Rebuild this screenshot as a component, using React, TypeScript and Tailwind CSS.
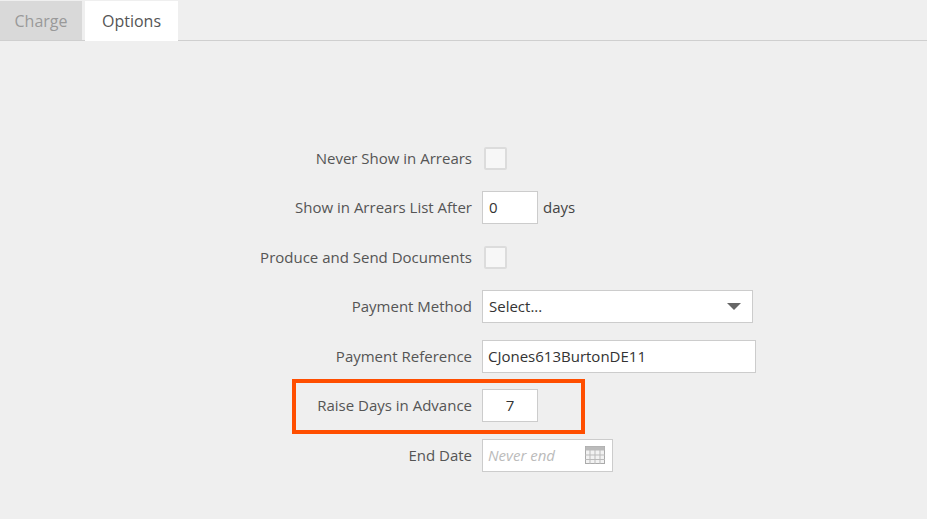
import { ChevronDown } from "lucide-react";

const Row = ({ label, children, highlight }: { label: string; children: React.ReactNode; highlight?: boolean }) => (
  <div className="relative flex items-center h-[32px]">
    <div className="w-[472px] text-right pr-0 text-[#555]">{label}</div>
    <div className="ml-[10px] flex items-center">{children}</div>
    {highlight && (
      <div className="absolute left-[292px] top-[-11px] w-[293px] h-[55px] border-4 border-[#ff4e00]" />
    )}
  </div>
);

const Check = () => (
  <div className="ml-[2px] w-[23px] h-[23px] border-2 border-[#dcdcdc] bg-[#f7f7f7] rounded-[2px]" />
);

export default function App() {
  return (
    <div className="w-[927px] h-[519px] bg-[#efefef] text-[15px]" style={{ fontFamily: '"Open Sans", "Noto Sans", sans-serif' }}>
      <div className="flex items-end h-[41px] border-b border-[#cfcfcf] pt-[2px]">
        <div className="w-[82px] h-[39px] bg-[#d9d9d9] text-[#999] flex items-center justify-center text-[16px]">Charge</div>
        <div className="ml-[3px] w-[93px] h-[40px] mb-[-1px] bg-white text-[#555] flex items-center justify-center text-[16px]">Options</div>
      </div>
      <div className="pt-[101px] flex flex-col gap-[17.5px]">
        <Row label="Never Show in Arrears"><Check /></Row>
        <Row label="Show in Arrears List After">
          <div className="w-[56px] h-[33px] bg-white border border-[#ccc] px-[6px] flex items-center text-[#333]">0</div>
          <span className="ml-[5px] text-[#444]">days</span>
        </Row>
        <Row label="Produce and Send Documents"><Check /></Row>
        <Row label="Payment Method">
          <div className="w-[271px] h-[33px] bg-white border border-[#ccc] px-[6px] flex items-center justify-between text-[#333]">
            Select...
            <svg width="14" height="8" viewBox="0 0 14 8" className="mr-[5px]"><path d="M0 0h14L7 7z" fill="#666" /></svg>
          </div>
        </Row>
        <Row label="Payment Reference">
          <div className="w-[274px] h-[33px] bg-white border border-[#ccc] px-[5px] flex items-center text-[#333]">CJones613BurtonDE11</div>
        </Row>
        <Row label="Raise Days in Advance" highlight>
          <div className="w-[56px] h-[33px] bg-white border border-[#ccc] flex items-center justify-center text-[#333]">7</div>
        </Row>
        <Row label="End Date">
          <div className="w-[131px] h-[33px] bg-white border border-[#ccc] px-[5px] flex items-center justify-between text-[#bbb] italic">
            Never end
            <svg width="20" height="18" viewBox="0 0 20 18" className="mr-[2px]">
              <rect x="0.5" y="0.5" width="19" height="17" fill="#f2f2f2" stroke="#aaa" />
              <rect x="0.5" y="0.5" width="19" height="4" fill="#bbb" />
              <path d="M5 4v14M10 4v14M15 4v14M0 9h20M0 13.5h20" stroke="#bbb" />
            </svg>
          </div>
        </Row>
      </div>
    </div>
  );
}
